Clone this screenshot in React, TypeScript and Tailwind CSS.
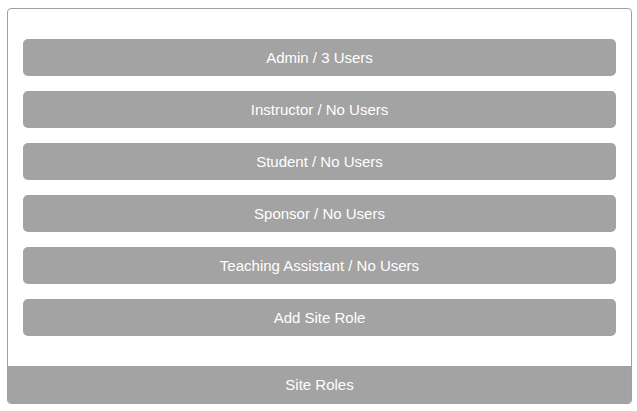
import React from "react";

const roles = [
  "Admin / 3 Users",
  "Instructor / No Users",
  "Student / No Users",
  "Sponsor / No Users",
  "Teaching Assistant / No Users",
  "Add Site Role",
];

export default function App() {
  return (
    <div className="w-[637px] h-[411px] bg-white pl-[7px] pt-[8px]" style={{ fontFamily: '"Liberation Sans", Arial, sans-serif' }}>
      <div className="w-[625px] border border-[#a0a0a0] rounded-[4px] overflow-hidden flex flex-col">
        <div className="flex flex-col gap-[15px] px-[15px] pt-[30px] pb-[30px]">
          {roles.map((r) => (
            <div key={r} className="h-[37px] pt-[2px] rounded-[5px] bg-[#a3a3a3] text-white text-[15px] flex items-center justify-center">
              {r}
            </div>
          ))}
        </div>
        <div className="h-[37px] pt-[2px] bg-[#a3a3a3] text-white text-[15px] flex items-center justify-center">
          Site Roles
        </div>
      </div>
    </div>
  );
}
